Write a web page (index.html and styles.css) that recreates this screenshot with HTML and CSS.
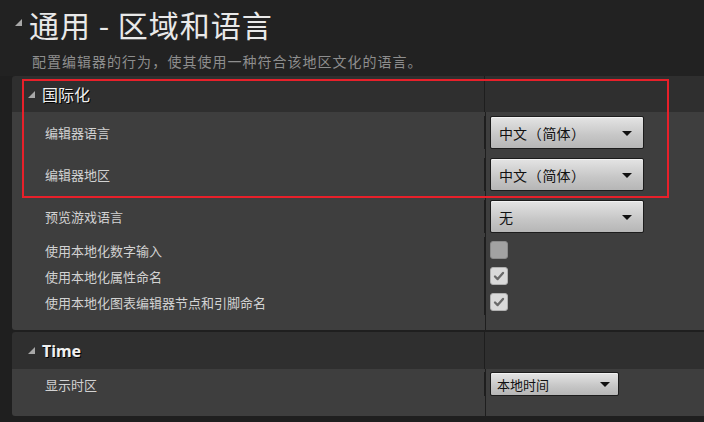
FILE: index.html
```html
<!DOCTYPE html>
<html lang="zh-CN">
<head>
  <meta charset="UTF-8">
  <title>通用 - 区域和语言</title>
  <link rel="stylesheet" href="styles.css">
</head>
<body>

  <!-- Page title -->
  <div class="page-head">
    <div class="page-title">
      <svg class="tri tri-big" viewBox="0 0 7 7"><polygon points="7,0 7,7 0,7"/></svg>
      <span>通用 - 区域和语言</span>
    </div>
    <div class="page-desc">配置编辑器的行为<span class="fw">，</span>使其使用一种符合该地区文化的语言。</div>
  </div>

  <!-- Internationalization -->
  <div class="category">
    <div class="cat-head">
      <div class="cat-name">
        <svg class="tri" viewBox="0 0 7 7"><polygon points="7,0 7,7 0,7"/></svg>
        <span>国际化</span>
      </div>
      <div class="cat-value"></div>
    </div>
    <div class="cat-body first-body">
      <div class="row row-combo">
        <div class="label">编辑器语言</div>
        <div class="value"><div class="combo">中文<span class="fw">（</span>简体<span class="fw">）</span><i class="arrow"></i></div></div>
      </div>
      <div class="row row-combo">
        <div class="label">编辑器地区</div>
        <div class="value"><div class="combo">中文<span class="fw">（</span>简体<span class="fw">）</span><i class="arrow"></i></div></div>
      </div>
      <div class="row row-combo">
        <div class="label">预览游戏语言</div>
        <div class="value"><div class="combo">无<i class="arrow"></i></div></div>
      </div>
      <div class="row row-check">
        <div class="label">使用本地化数字输入</div>
        <div class="value"><div class="check"></div></div>
      </div>
      <div class="row row-check">
        <div class="label">使用本地化属性命名</div>
        <div class="value">
          <div class="check on"><svg viewBox="0 0 18 18"><path d="M4.5 9.5 L7.5 12.5 L13.5 5.5"/></svg></div>
        </div>
      </div>
      <div class="row row-check">
        <div class="label">使用本地化图表编辑器节点和引脚命名</div>
        <div class="value">
          <div class="check on"><svg viewBox="0 0 18 18"><path d="M4.5 9.5 L7.5 12.5 L13.5 5.5"/></svg></div>
        </div>
      </div>
    </div>
  </div>

  <!-- Time -->
  <div class="category">
    <div class="cat-head">
      <div class="cat-name">
        <svg class="tri" viewBox="0 0 7 7"><polygon points="7,0 7,7 0,7"/></svg>
        <span class="latin">Time</span>
      </div>
      <div class="cat-value"></div>
    </div>
    <div class="cat-body last-body">
      <div class="row row-small">
        <div class="label">显示时区</div>
        <div class="value"><div class="combo combo-small">本地时间<i class="arrow"></i></div></div>
      </div>
    </div>
  </div>

  <!-- Annotation box -->
  <div class="highlight"></div>

</body>
</html>
```

FILE: styles.css
```css
body {
  margin: 0;
  background-color: #1f1f1f;
  font-family: "Noto Sans CJK SC", "Noto Sans", sans-serif;
  color: #d0d0d0;
  overflow: hidden;
  position: relative;
  height: 422px;
}

/* full-width punctuation, glyph centred in its cell */
.fw {
  display: inline-block;
  width: 1.1em;
  text-align: center;
}

/* Title block */
.page-head {
  background-color: #222222;
  padding: 4px 0 5px 0;
}

.page-title {
  display: flex;
  align-items: center;
  height: 40px;
  padding-left: 15px;
  gap: 7px;
  font-size: 30px;
  letter-spacing: 1px;
  color: #e9e9e9;
}

.tri {
  width: 7px;
  height: 7px;
  fill: #a8a8a8;
  flex: none;
}

.tri-big {
  width: 7px;
  height: 7px;
  margin-top: -4px;
}

.page-desc {
  height: 20px;
  line-height: 20px;
  padding-left: 32px;
  font-size: 14px;
  letter-spacing: 1px;
  color: #8e8e8e;
  margin-top: 7px;
}

/* Category panels */
.category {
  margin-left: 12px;
  width: 720px;
  border-radius: 3px 0 0 3px;
  overflow: hidden;
}

.category + .category {
  margin-top: 2px;
}

.cat-head {
  display: grid;
  grid-template-columns: 473px 1fr;
  height: 36px;
  background-color: #2f2f2f;
}

.cat-name {
  display: flex;
  align-items: center;
  gap: 7px;
  padding-left: 16px;
  font-size: 16px;
  color: #f0f0f0;
  text-shadow: 1px 1px 0 #000;
  border-right: 1px solid #1e1e1e;
}

.cat-name .latin {
  font-weight: bold;
  font-family: "Noto Sans", sans-serif;
}

.category + .category .cat-head {
  height: 37px;
}

.cat-body {
  background-color: #3e3e3e;
  background-image: linear-gradient(#1e1e1e, #1e1e1e);
  background-size: 1px 100%;
  background-position: 473px 0;
  background-repeat: no-repeat;
}

.first-body {
  padding: 4px 0 15px 0;
}

.last-body {
  padding: 3px 0 20px 0;
}

.row {
  display: grid;
  grid-template-columns: 473px 1fr;
  align-items: stretch;
}

.row-combo {
  height: 33px;
}

.row-combo + .row-combo {
  margin-top: 9px;
}

.row-combo + .row-check {
  margin-top: 4px;
}

.row-check {
  height: 26px;
}

.row-small {
  height: 24px;
}

.label {
  display: flex;
  align-items: center;
  padding-left: 33px;
  font-size: 13px;
  color: #d2d2d2;
  border-right: 1px solid #1e1e1e;
}

.value {
  display: flex;
  align-items: center;
  padding-left: 5px;
}

/* Combo boxes */
.combo {
  position: relative;
  box-sizing: border-box;
  width: 154px;
  height: 33px;
  display: flex;
  align-items: center;
  padding-left: 8px;
  font-size: 14px;
  color: #111;
  border: 1px solid #1c1c1c;
  border-radius: 2px;
  background: linear-gradient(#e4e4e4, #c6c6c6 60%, #b6b6b6);
  box-shadow: inset 0 1px 0 #f2f2f2;
}

.combo-small {
  width: 129px;
  height: 24px;
  padding-left: 6px;
  font-size: 13px;
}

.arrow {
  position: absolute;
  right: 11px;
  top: 50%;
  margin-top: -2px;
  width: 0;
  height: 0;
  border-left: 5px solid transparent;
  border-right: 5px solid transparent;
  border-top: 5px solid #111;
}

.combo-small .arrow {
  right: 8px;
}

/* Check boxes */
.check {
  box-sizing: border-box;
  width: 18px;
  height: 18px;
  border-radius: 3px;
  background-color: #a2a2a2;
  border: 1px solid #8a8a8a;
}

.check.on {
  background-color: #dadada;
  border-color: #b0b0b0;
}

.check svg {
  display: block;
  width: 16px;
  height: 16px;
  fill: none;
  stroke: #6a6a6a;
  stroke-width: 2.6;
  stroke-linecap: round;
  stroke-linejoin: round;
}

/* Red annotation frame */
.highlight {
  position: absolute;
  left: 22px;
  top: 79px;
  width: 643px;
  height: 115px;
  border: 2px solid #e8202a;
  pointer-events: none;
}
```
